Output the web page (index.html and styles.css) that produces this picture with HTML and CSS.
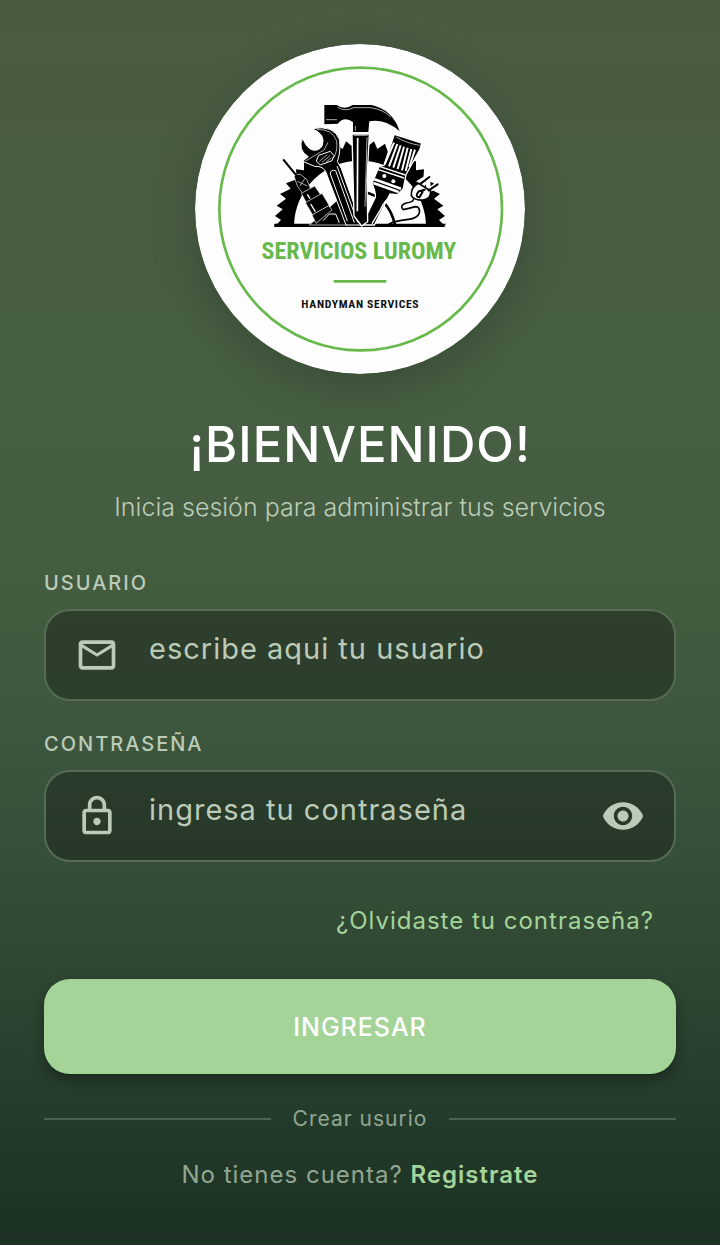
FILE: index.html
```html
<!DOCTYPE html>
<html lang="es">
<head>
    <meta charset="UTF-8">
    <meta name="viewport" content="width=device-width, initial-scale=1.0">
    <title>Servicios Luromy</title>
    <link rel="stylesheet" href="styles.css">
</head>
<body>
    <main class="login">
        <svg class="logo" viewBox="15 12 990 990" role="img" aria-label="Servicios Luromy">
            <circle cx="510" cy="507" r="495" fill="#fefefe"/>
            <circle cx="512" cy="507" r="424" fill="none" stroke="#67b94b" stroke-width="8"/>

            <!-- saw blade -->
            <g id="blade">
                <path id="half" d="M253 560 L273 540 L255 528 L278 508 L260 497 L288 476 L270 462 L302 446 L288 430 L320 418 L318 388 L342 391 L342 363 L368 369 L372 340 L396 351 L403 323 L426 337 L435 311 L458 327 L468 304 L490 322 L512 322 L512 362 A198 198 0 0 0 312 560 Z"/>
                <use href="#half" transform="translate(1020 0) scale(-1 1)"/>
            </g>
            <path d="M253 551 H768 L760 561 H253 Z"/>
            <path d="M520 456 Q596 470 615 555" fill="none" stroke="#000" stroke-width="8"/>

            <!-- drill -->
            <g stroke="#fff" stroke-width="2">
                <path d="M358 555 L424 497 L440 482 L476 555 Z"/>
                <path d="M312 408 L330 402 L350 418 L362 446 L338 460 L322 438 Z"/>
                <path d="M334 460 L374 438 L392 464 L350 490 Z"/>
                <path d="M346 488 L396 460 L418 497 L368 525 Z"/>
                <path d="M366 525 L416 497 L426 510 L378 550 Z"/>
                <path d="M322 424 L352 438 M330 438 L345 415" fill="none"/>
            </g>
            <path d="M281 360 L324 412" stroke="#000" stroke-width="6" stroke-linecap="round"/>
            <path d="M362 492 L376 515 M352 463 L360 476" stroke="#fff" stroke-width="4"/>
            <path d="M399 542 L418 522 H437 L448 548" fill="none" stroke="#fff" stroke-width="3"/>

            <!-- wrench -->
            <path d="M366 266 Q432 253 449 300 Q452 340 442 364 L454 386 L514 555 H468 L406 392 Q396 378 374 379 L338 364 L355 350 Q322 330 338 294 Q350 326 368 330 Q388 334 397 316 Q408 282 366 266 Z" stroke="#fff" stroke-width="3"/>
            <path d="M380 269 Q426 265 440 303 Q444 335 429 356 M347 363 L402 330 L414 307" fill="none" stroke="#fff" stroke-width="2"/>
            <path d="M379 363 L386 346 L421 334 L432 347 L426 362 L391 375 Z" fill="none" stroke="#fff" stroke-width="3"/>
            <path d="M388 364 L412 344 M395 368 L420 347 M408 366 L425 353" stroke="#fff" stroke-width="2"/>
            <path d="M472 543 L421 402 Q421 387 437 392 L493 548 M441 378 L503 547" fill="none" stroke="#fff" stroke-width="3"/>

            <!-- brush -->
            <path d="M613 283 L695 309 L690 328 L648 404 L640 446 L622 464 L600 462 L553 555 H516 L556 472 Q558 458 546 430 L568 378 L582 376 Z" stroke="#fff" stroke-width="4"/>
            <path d="M612 308 L584 373 M622 312 L597 379 M632 316 L610 383 M642 320 L623 387 M653 323 L636 391 M664 327 L647 393 M675 329 L658 381" stroke="#fff" stroke-width="6"/>
            <path d="M619 291 Q650 310 689 316" fill="none" stroke="#fff" stroke-width="2"/>
            <path d="M568 379 L646 405 M563 388 L642 414" stroke="#fff" stroke-width="4"/>
            <path d="M553 418 L633 446 M550 429 L626 456" stroke="#fff" stroke-width="8"/>
            <circle cx="583" cy="408" r="6" fill="#fff"/>
            <circle cx="610" cy="424" r="6" fill="#fff"/>
            <path d="M607 467 Q584 480 572 508 L546 551" fill="none" stroke="#fff" stroke-width="4"/>

            <!-- hammer -->
            <path d="M486 282 H538 L531 420 L533 545 L515 558 L492 528 Z" stroke="#fff" stroke-width="4"/>
            <path d="M403 195 H440 Q463 211 488 195 H545 Q608 209 629 274 Q586 234 538 244 L535 276 H489 V246 Q463 228 443 251 L403 253 Z"/>
            <path d="M408 239 H441 M443 202 Q465 216 491 203 H541 Q580 208 603 232 M496 258 V272 M491 286 H533" fill="none" stroke="#fff" stroke-width="2"/>
            <path d="M503 294 L502 514" stroke="#fff" stroke-width="5"/>
            <path d="M531 292 L525 500" stroke="#fff" stroke-width="2"/>

            <!-- plug and cable -->
            <path d="M706 435 L691 424 L714 410 M718 450 L742 433 M716 448 L713 417" fill="none" stroke="#fff" stroke-width="14"/>
            <path d="M664 467 Q662 442 685 430 L722 453 Q724 477 699 480 Q673 482 664 467 Z" fill="#fff" stroke="#000" stroke-width="5"/>
            <path d="M692 431 L718 411 M716 451 L743 433 M704 449 L686 454 Q673 470 688 472 L698 455" fill="none" stroke="#000" stroke-width="6" stroke-linecap="round"/>
            <path d="M671 474 Q673 487 648 489 Q627 497 640 509 Q660 505 676 500 Q691 500 688 519 Q683 536 650 539 Q616 542 596 553" fill="none" stroke="#000" stroke-width="5"/>

            <text class="logo-name" x="507" y="658">SERVICIOS LUROMY</text>
            <path d="M431 724 H589" stroke="#67b94b" stroke-width="8"/>
            <text class="logo-tagline" x="511" y="804">HANDYMAN SERVICES</text>
        </svg>

        <h1 class="title">¡BIENVENIDO!</h1>
        <p class="subtitle">Inicia sesión para administrar tus servicios</p>

        <form class="form">
            <label class="label" for="usuario">USUARIO</label>
            <div class="field">
                <svg class="icon" viewBox="0 0 24 24" aria-hidden="true">
                    <path d="M22 6c0-1.100-.9-2-2-2H4c-1.100 0-2 .9-2 2v12c0 1.100.9 2 2 2h16c1.100 0 2-.9 2-2V6zm-2 0l-8 5-8-5h16zm0 12H4V8l8 5 8-5v10z"/>
                </svg>
                <input class="input" type="text" id="usuario" placeholder="escribe aqui tu usuario" autocomplete="username">
            </div>

            <label class="label" for="password">CONTRASEÑA</label>
            <div class="field">
                <svg class="icon" viewBox="0 0 24 24" aria-hidden="true">
                    <path d="M18 8h-1V6c0-2.760-2.240-5-5-5S7 3.240 7 6v2H6c-1.100 0-2 .9-2 2v10c0 1.100.9 2 2 2h12c1.100 0 2-.9 2-2V10c0-1.100-.9-2-2-2zM9 6c0-1.660 1.340-3 3-3s3 1.340 3 3v2H9V6zm9 14H6V10h12v10zm-6-3c1.100 0 2-.9 2-2s-.9-2-2-2-2 .9-2 2 .9 2 2 2z"/>
                </svg>
                <input class="input" type="password" id="password" placeholder="ingresa tu contraseña" autocomplete="current-password">
                <button class="toggle" type="button" id="toggle" aria-label="Mostrar contraseña">
                    <svg class="icon" viewBox="0 0 24 24" aria-hidden="true">
                        <path d="M12 4.500C7 4.500 2.730 7.610 1 12c1.730 4.390 6 7.500 11 7.500s9.270-3.110 11-7.500c-1.730-4.390-6-7.500-11-7.500zM12 17c-2.760 0-5-2.240-5-5s2.240-5 5-5 5 2.240 5 5-2.240 5-5 5zm0-8c-1.660 0-3 1.340-3 3s1.340 3 3 3 3-1.340 3-3-1.340-3-3-3z"/>
                    </svg>
                </button>
            </div>

            <a class="forgot" href="#">¿Olvidaste tu contraseña?</a>
            <button class="submit" type="submit">INGRESAR</button>
        </form>

        <div class="divider">Crear usurio</div>
        <p class="register">No tienes cuenta? <a class="register-link" href="#">Registrate</a></p>
    </main>
    <script>
        const password = document.getElementById('password');

        // Function to toggle password visibility
        document.getElementById('toggle').addEventListener('click', () => {
            password.type = password.type === 'password' ? 'text' : 'password';
        });
    </script>
</body>
</html>
```
FILE: styles.css
```css
* {
    box-sizing: border-box;
}
body {
    margin: 0;
    min-height: 100vh;
    background: linear-gradient(#4a5b42 0%, #475f43 28%, #435c40 48%, #3c563d 60%, #304833 77%, #233b2a 90%, #1c3123 100%);
    font-family: Inter, "Liberation Sans", sans-serif;
    letter-spacing: 1px;
    color: #bccbb8;
}
.login {
    display: flex;
    flex-direction: column;
    max-width: 720px;
    margin: 0 auto;
    padding: 44px;
}
.logo {
    align-self: center;
    width: 330px;
    height: 330px;
    border-radius: 50%;
    box-shadow: 0 12px 48px rgba(0, 0, 0, 0.2);
}
.logo-name,
.logo-tagline {
    font-family: "Roboto Condensed", "DejaVu Sans Condensed", sans-serif;
    font-weight: bold;
    text-anchor: middle;
}
.logo-name {
    font-size: 72px;
    letter-spacing: 0;
    fill: #67b94b;
}
.logo-tagline {
    font-size: 35px;
    letter-spacing: 2px;
    fill: #111;
}
.title {
    margin: 41px 0 0;
    font-size: 49px;
    line-height: 60px;
    font-weight: 500;
    text-align: center;
    color: #fff;
}
.subtitle {
    margin: 16px 0 0;
    font-size: 25px;
    line-height: 32px;
    font-weight: 300;
    letter-spacing: 0;
    text-align: center;
}
.form {
    display: flex;
    flex-direction: column;
    margin-top: 48px;
}
.label {
    margin-bottom: 14px;
    font-size: 20px;
    line-height: 24px;
    font-weight: 500;
    letter-spacing: 2px;
}
.field {
    display: flex;
    align-items: center;
    gap: 30px;
    height: 92px;
    padding: 0 29px;
    margin-bottom: 31px;
    border: 2px solid #556b53;
    border-radius: 26px;
    background: rgba(20, 26, 20, 0.42);
}
.icon {
    display: block;
    flex: none;
    width: 44px;
    height: 44px;
    fill: #bccbb8;
}
.input {
    flex: 1;
    min-width: 0;
    padding: 0 0 14px;
    border: 0;
    outline: 0;
    background: none;
    font: inherit;
    font-size: 29px;
    letter-spacing: inherit;
    color: #fff;
}
.input::placeholder {
    color: #bccbb8;
    opacity: 1;
}
.toggle {
    padding: 0;
    border: 0;
    background: none;
    cursor: pointer;
}
.forgot {
    align-self: flex-end;
    margin: 12px 22px 0 0;
    font-size: 24px;
    line-height: 32px;
    color: #a4d49a;
    text-decoration: none;
}
.submit {
    height: 95px;
    margin-top: 42px;
    border: 0;
    border-radius: 26px;
    background: #a4d498;
    box-shadow: 0 6px 14px rgba(0, 0, 0, 0.35);
    font: inherit;
    font-size: 25px;
    font-weight: 500;
    letter-spacing: inherit;
    color: #fff;
    cursor: pointer;
}
.divider {
    display: flex;
    align-items: center;
    gap: 22px;
    margin-top: 30px;
    font-size: 21px;
    line-height: 30px;
    color: #93a692;
}
.divider::before,
.divider::after {
    content: "";
    flex: 1;
    height: 2px;
    background: #496450;
}
.register {
    margin: 25px 0 0;
    font-size: 24px;
    line-height: 32px;
    text-align: center;
    color: #93a692;
}
.register-link {
    font-weight: 600;
    color: #a4d49a;
    text-decoration: none;
}
```
